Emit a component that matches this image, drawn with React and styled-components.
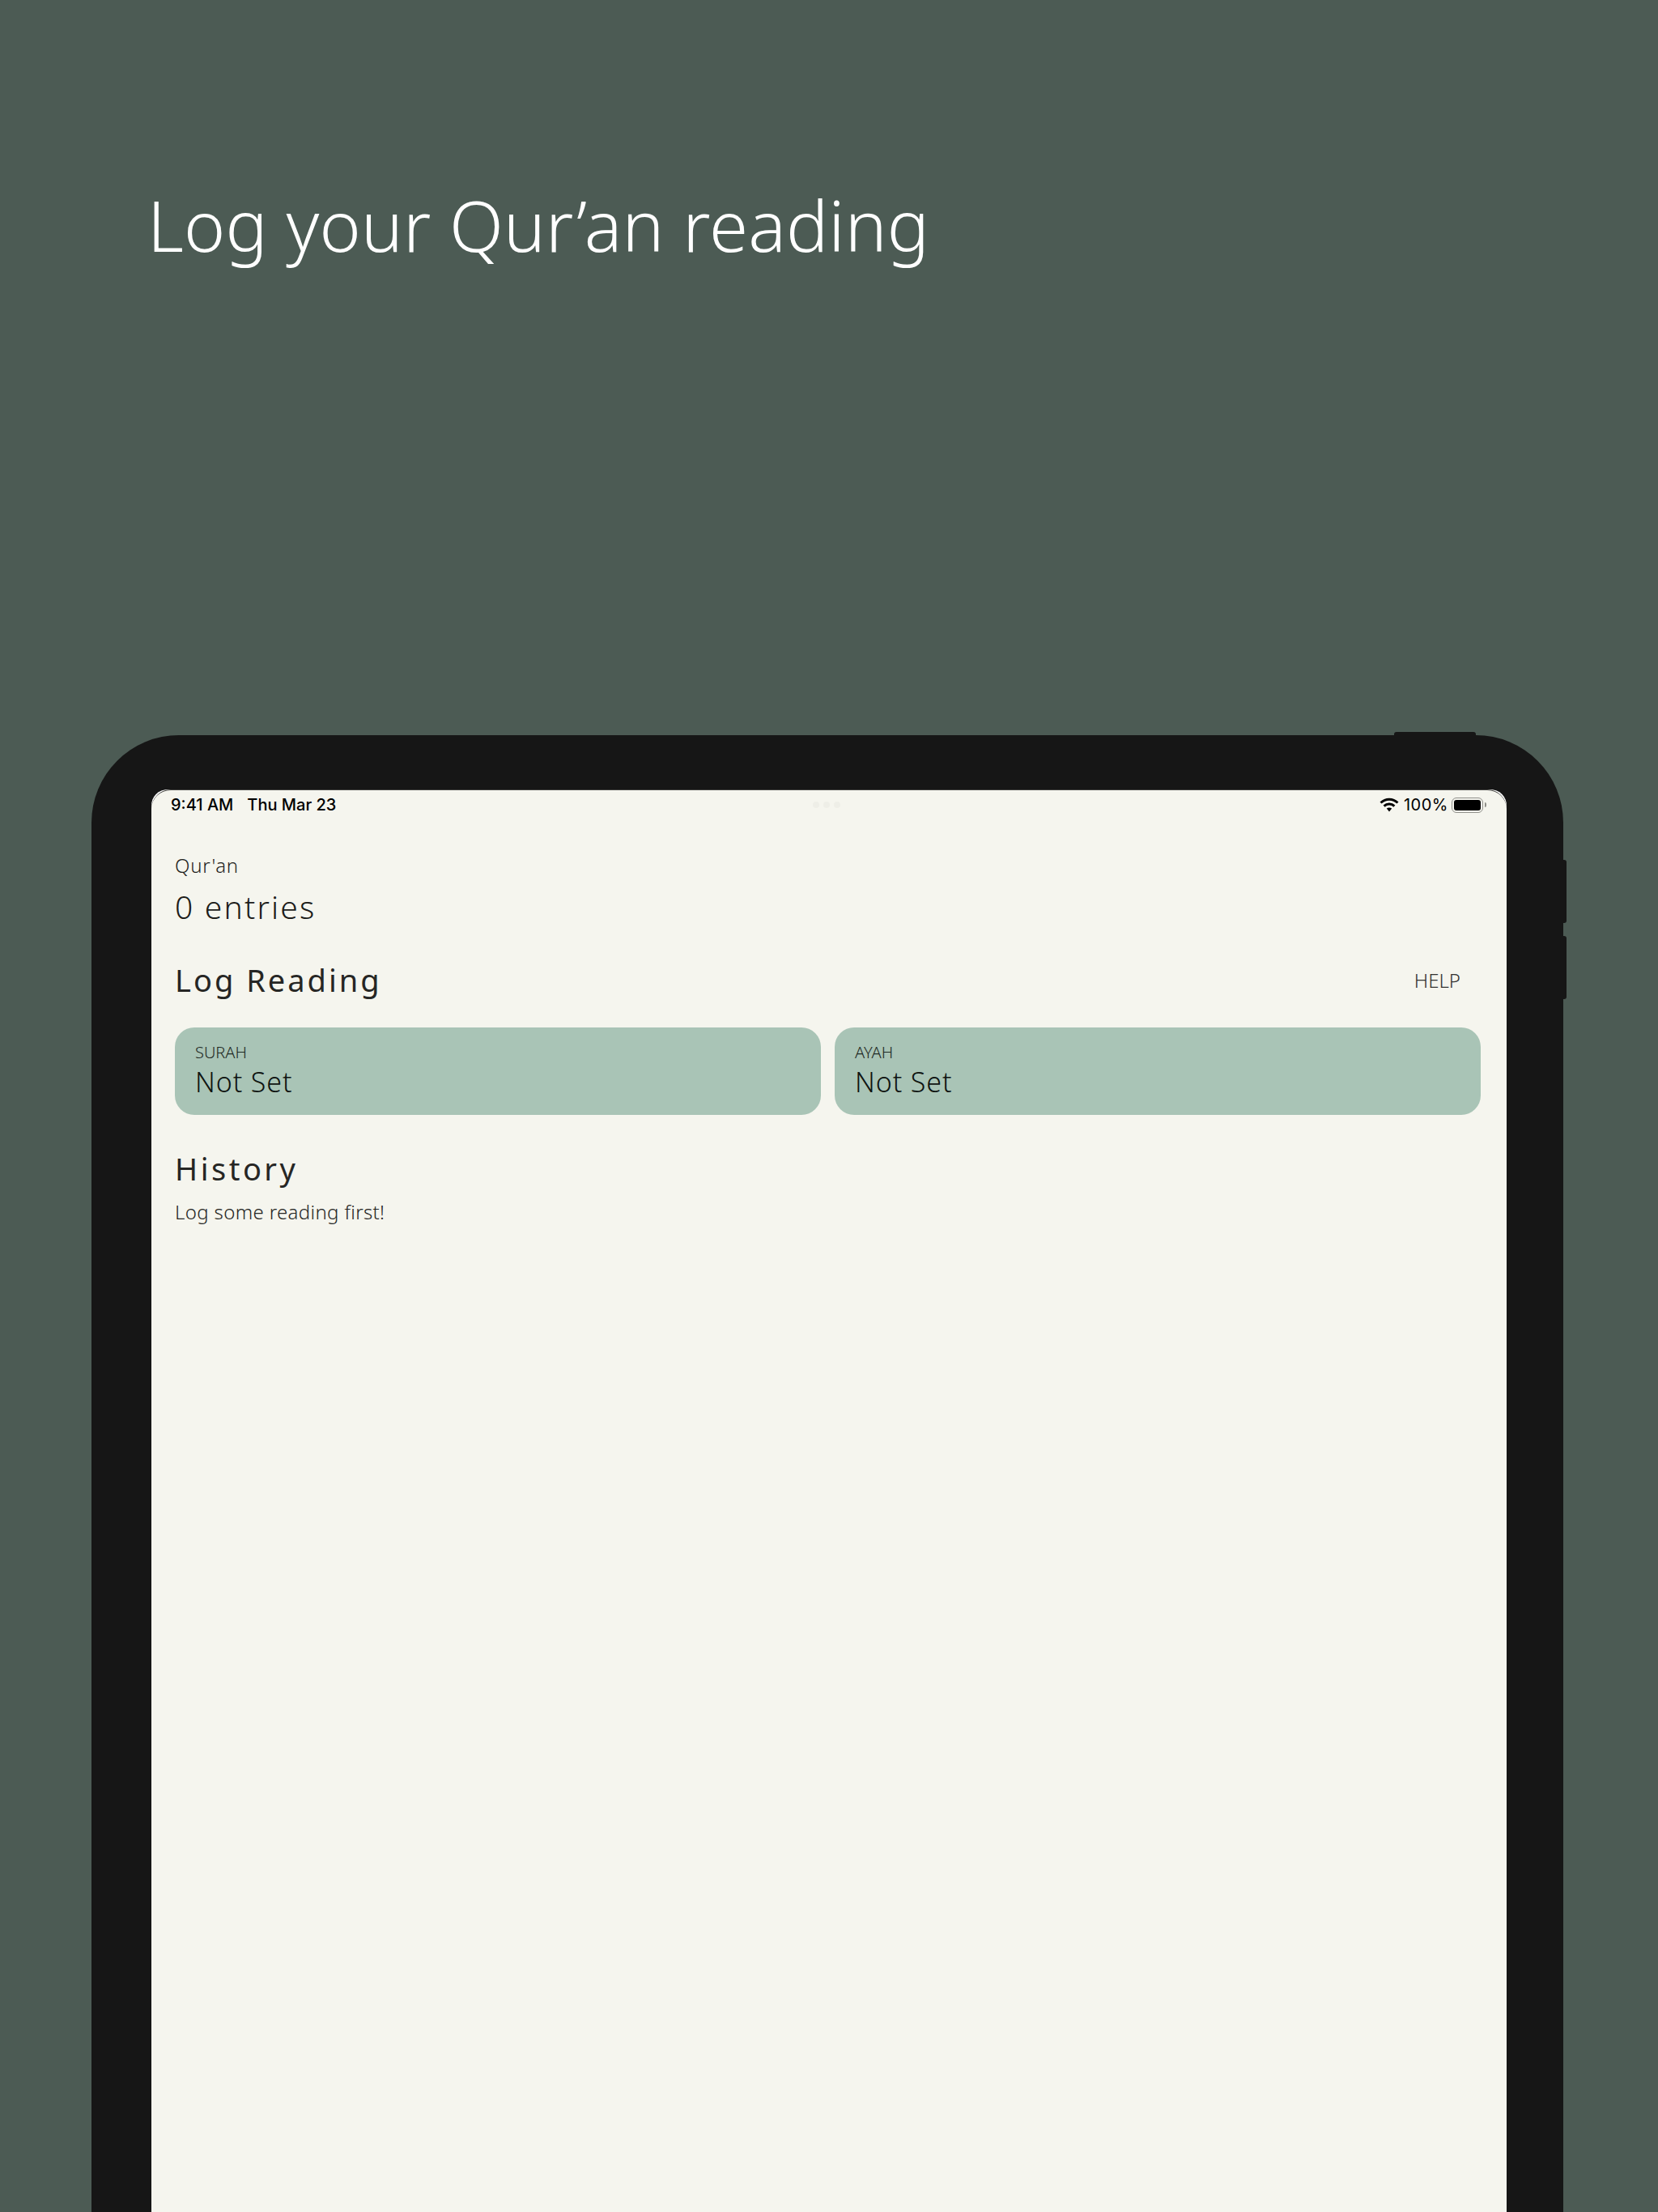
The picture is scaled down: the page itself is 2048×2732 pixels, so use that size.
import React from 'react';
import styled, {createGlobalStyle} from 'styled-components';

const GlobalStyle = createGlobalStyle`
  html, body {
    margin: 0;
    padding: 0;
    background: #4c5b54;
  }
  #root {
    width: 2048px;
    height: 2732px;
    overflow: hidden;
  }
`;

const Page = styled.div`
  width: 2048px;
  height: 2732px;
  background: #4c5b54;
  font-family: "Noto Sans", sans-serif;
  overflow: hidden;
`;
const Hero = styled.h1`
  height: 908px;
  margin: 0;
  padding: 217px 0 0 182px;
  box-sizing: border-box;
  font-size: 87px;
  line-height: 120px;
  font-weight: 300;
  letter-spacing: 0.15px;
  color: #fff;
`;
const Device = styled.div`
  position: relative;
  width: 1818px;
  height: 1900px;
  margin-left: 113px;
  padding: 67px 70px 0 74px;
  box-sizing: border-box;
  background: #161616;
  border-radius: 108px 108px 0 0;
`;
const TopButton = styled.div`
  position: absolute;
  top: -4px;
  left: 1609px;
  width: 101px;
  height: 8px;
  background: #161616;
  border-radius: 3px 3px 0 0;
`;
const SideButton = styled.div`
  position: absolute;
  top: ${props => props.$top}px;
  right: -4px;
  width: 8px;
  height: 78px;
  background: #161616;
  border-radius: 0 3px 3px 0;
`;
const Bezel = styled.div`
  height: 1800px;
  background: #fff;
  border-radius: 20px 20px 0 0;
`;
const Screen = styled.div`
  height: 100%;
  background: #f5f5ee;
  border-top: 1px solid #3c3c3a;
  border-radius: 24px 24px 0 0;
  box-sizing: border-box;
`;
const StatusBar = styled.div`
  position: relative;
  display: flex;
  align-items: center;
  justify-content: space-between;
  height: 36px;
  padding: 0 25px 0 24px;
  font-family: Inter, "Liberation Sans", sans-serif;
  font-size: 20px;
  font-weight: 500;
  color: #000;
`;
const Clock = styled.div`
  display: flex;
  gap: 17px;
`;
const Dots = styled.div`
  position: absolute;
  top: 14px;
  left: 817px;
  display: flex;
  gap: 5px;
`;
const Dot = styled.span`
  width: 8px;
  height: 8px;
  border-radius: 50%;
  background: #eeeee7;
`;
const StatusRight = styled.div`
  display: flex;
  align-items: center;
`;
const Percent = styled.span`
  margin: 0 4px 0 6px;
  font-weight: 400;
  letter-spacing: 0.5px;
`;
const Battery = styled.div`
  width: 39px;
  height: 19px;
  padding: 2px;
  box-sizing: border-box;
  border: 1px solid #8f8f8a;
  border-radius: 6px;
`;
const BatteryFill = styled.div`
  height: 100%;
  background: #000;
  border-radius: 3px;
`;
const BatteryTip = styled.div`
  width: 2px;
  height: 6px;
  margin-left: 2px;
  background: #8f8f8a;
  border-radius: 0 2px 2px 0;
`;
const Content = styled.div`
  padding: 41px 32px 0 29px;
  color: #262624;
`;
const AppName = styled.div`
  font-size: 24px;
  line-height: 32px;
  font-weight: 300;
  letter-spacing: 0.8px;
  color: #1f1f1d;
`;
const Entries = styled.div`
  margin-top: 10px;
  font-size: 39px;
  line-height: 50px;
  font-weight: 300;
  letter-spacing: 2.2px;
  color: #1c1c1a;
`;
const SectionRow = styled.div`
  display: flex;
  align-items: center;
  justify-content: space-between;
  margin-top: 37px;
  height: 56px;
`;
const SectionTitle = styled.h2`
  margin: 0;
  font-size: 38px;
  line-height: 56px;
  font-weight: 400;
  letter-spacing: 3px;
`;
const HelpButton = styled.button`
  padding: 0 25px;
  border: 0;
  background: none;
  font-family: inherit;
  font-size: 24px;
  font-weight: 300;
  color: #333331;
`;
const Fields = styled.div`
  display: grid;
  grid-template-columns: 1fr 1fr;
  gap: 17px;
  margin-top: 31px;
`;
const Field = styled.div`
  height: 108px;
  padding: 17px 25px 0;
  box-sizing: border-box;
  background: #a9c4b6;
  border-radius: 24px;
`;
const FieldLabel = styled.div`
  font-size: 20px;
  line-height: 27px;
  font-weight: 300;
  color: #1f2a25;
`;
const FieldValue = styled.div`
  font-size: 34px;
  line-height: 46px;
  font-weight: 300;
  letter-spacing: 0.9px;
  color: #0f1411;
`;
const HistoryTitle = styled(SectionTitle)`
  margin-top: 38px;
  letter-spacing: 3.5px;
`;
const Empty = styled.p`
  margin: 10px 0 0;
  font-size: 24px;
  line-height: 32px;
  font-weight: 300;
  letter-spacing: 0.35px;
  color: #262624;
`;

const Wifi = () => (
  <svg width="24" height="18" viewBox="0 0 24 18" fill="none" stroke="#000" strokeWidth="3">
    <path d="M1.5 6.5 C7.5 0.8 16.5 0.8 22.5 6.5"/>
    <path d="M5.6 10.6 C9.2 7.2 14.8 7.2 18.4 10.6"/>
    <path d="M8.8 13.6 L12 17.6 L15.2 13.6 C13.4 12 10.6 12 8.8 13.6 Z" fill="#000" stroke="none"/>
  </svg>
);

const App = () => {
    return (
        <Page>
            <GlobalStyle/>
            <Hero>Log your Qur’an reading</Hero>
            <Device>
                <TopButton/>
                <SideButton $top={154}/>
                <SideButton $top={248}/>
                <Bezel>
                    <Screen>
                        <StatusBar>
                            <Clock>
                                <span>9:41 AM</span>
                                <span>Thu Mar 23</span>
                            </Clock>
                            <Dots><Dot/><Dot/><Dot/></Dots>
                            <StatusRight>
                                <Wifi/>
                                <Percent>100%</Percent>
                                <Battery><BatteryFill/></Battery>
                                <BatteryTip/>
                            </StatusRight>
                        </StatusBar>
                        <Content>
                            <AppName>Qur'an</AppName>
                            <Entries>0 entries</Entries>
                            <SectionRow>
                                <SectionTitle>Log Reading</SectionTitle>
                                <HelpButton>HELP</HelpButton>
                            </SectionRow>
                            <Fields>
                                <Field>
                                    <FieldLabel>SURAH</FieldLabel>
                                    <FieldValue>Not Set</FieldValue>
                                </Field>
                                <Field>
                                    <FieldLabel>AYAH</FieldLabel>
                                    <FieldValue>Not Set</FieldValue>
                                </Field>
                            </Fields>
                            <HistoryTitle>History</HistoryTitle>
                            <Empty>Log some reading first!</Empty>
                        </Content>
                    </Screen>
                </Bezel>
            </Device>
        </Page>
    );
};

export default App;
